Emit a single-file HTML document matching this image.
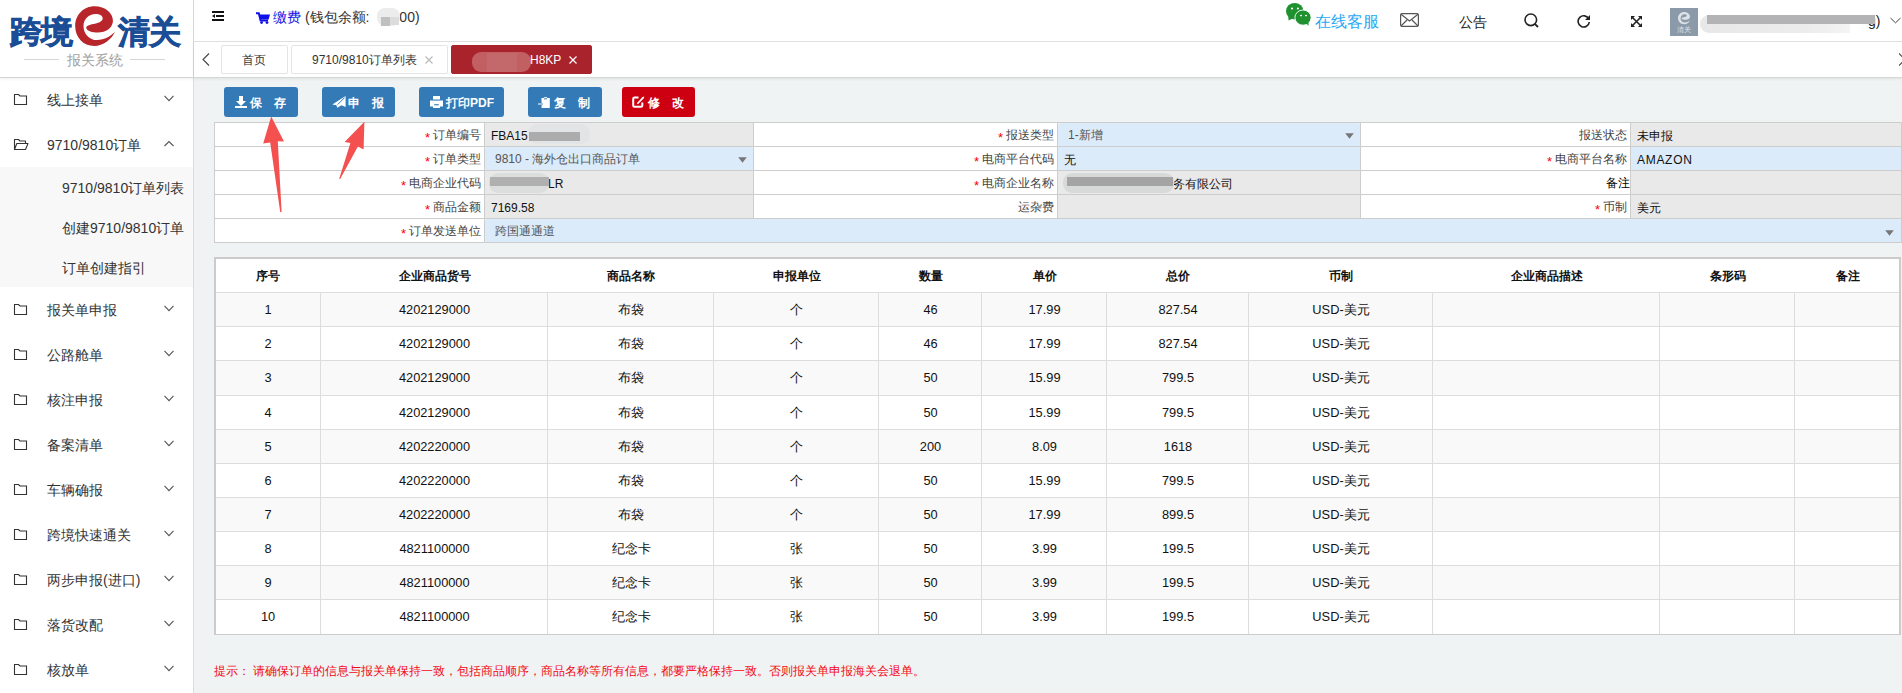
<!DOCTYPE html>
<html><head><meta charset="utf-8">
<style>
*{box-sizing:border-box;margin:0;padding:0}
html,body{width:1902px;height:693px;overflow:hidden}
body{position:relative;background:#f0f3f4;font-family:"Liberation Sans",sans-serif;color:#333;font-size:12px}
.abs{position:absolute}
#side{position:absolute;left:0;top:0;width:194px;height:693px;background:#fff;border-right:1px solid #dcdcdc}
#logo{position:absolute;left:0;top:0;width:193px;height:78px;border-bottom:1px solid #d6d6d6;box-shadow:0 1px 3px rgba(0,0,0,.07)}
.mi{position:absolute;left:0;width:193px;height:45px;font-size:14px;color:#333}
.mi .t{position:absolute;left:47px;top:14px;line-height:18px;white-space:nowrap}
.mi svg.f{position:absolute;left:13px;top:16px}
.mi svg.c{position:absolute;left:164px;top:18px}
#sub{position:absolute;left:0;top:167px;width:193px;height:120px;background:#f8f8f8}
.si{position:absolute;left:62px;font-size:14px;line-height:20px;color:#333;white-space:nowrap}
#hdr{position:absolute;left:194px;top:0;width:1708px;height:42px;background:#fff;border-bottom:1px solid #e2e2e2}
#tabs{position:absolute;left:194px;top:42px;width:1708px;height:36px;background:#fff;border-bottom:1px solid #d6d6d6;box-shadow:0 1px 3px rgba(0,0,0,.07)}
.tab{position:absolute;top:3px;height:29px;border:1px solid #e4e4e4;border-radius:2px;background:#fff;font-size:12px;line-height:29px;color:#333;white-space:nowrap}
.btn{position:absolute;top:87px;height:30px;border-radius:3px;background:#337ab7;color:#fff;font-size:12px;font-weight:bold;line-height:33px;white-space:nowrap}
.btn.red{background:#cc0010}
#form{position:absolute;left:214px;top:122px;width:1687px;border-collapse:collapse;table-layout:fixed}
#form td{height:24px;border:1px solid #cdcdcd;font-size:12px;padding:0;padding-top:1px;white-space:nowrap;overflow:hidden;line-height:22px}
#form td.l{background:#fff;text-align:right;color:#444;padding-right:3px}
#form td.v{background:#e9e9e9;color:#111;padding-left:6px;position:relative}
#form td.b{background:#dcebf9}
.req{color:#f00;font-size:13px;margin-right:3px;position:relative;top:3px}
#grid{position:absolute;left:214px;top:257px;width:1687px;border-collapse:collapse;table-layout:fixed;background:#fff}
#grid th{height:34px;font-size:12px;font-weight:bold;color:#111;border:1px solid #cfcfcf;border-left:0;border-right:0;text-align:center}
#grid td{height:34.15px;font-size:12.5px;color:#111;border:1px solid #dedede;text-align:center}
#grid tr.o td{background:#f9f9f9}
#hint{position:absolute;left:214px;top:663px;font-size:12px;color:#f20a14;white-space:nowrap;line-height:16px}
#form td.v .vt{line-height:22px;position:relative;top:1px}
#form td.sel{border-radius:4px;padding-left:10px}
#form td.sel .st{color:#555;line-height:22px}
.blur2{position:absolute;left:3px;top:3px;width:60px;height:17px;border-radius:8px;background:#dedede}
.blur2:after{content:"";position:absolute;left:3px;top:2px;width:54px;height:8px;background:#b8b8b8}
.blur3{position:absolute;left:3px;top:3px;width:112px;height:17px;border-radius:8px;background:#dedede}
.blur3:after{content:"";position:absolute;left:5px;top:2px;width:105px;height:8px;background:#b5b5b5}
.gh{position:absolute;top:260px;height:32px;line-height:33px;text-align:center;padding-left:2px;font-size:12px;font-weight:bold;color:#111;white-space:nowrap}
.gc{position:absolute;text-align:center;padding-left:2px;font-size:12.8px;color:#111;white-space:nowrap}
</style></head><body>
<div id="side">
  <div id="logo">
    <div class="abs" style="left:10px;top:12px;font-size:31.5px;font-weight:900;color:#1a4d95;line-height:40px;letter-spacing:-1px;-webkit-text-stroke:0.7px #1a4d95;white-space:nowrap">跨境</div>
    <svg class="abs" style="left:70px;top:2px" width="50" height="48" viewBox="0 0 722 693"><path fill="#b8262b" d="M650,430 C600,540 480,635 350,635 C190,635 75,510 75,350 C75,180 200,60 355,60 C510,60 625,160 620,275 C615,380 520,440 400,440 C330,440 240,420 235,375 C232,340 300,325 360,315 C430,300 475,270 472,235 C468,195 420,175 370,175 C270,175 195,250 195,345 C195,460 280,550 390,550 C500,550 590,490 650,430 Z"/></svg>
    <div class="abs" style="left:118px;top:12px;font-size:31.5px;font-weight:900;color:#1a4d95;line-height:40px;letter-spacing:-1px;-webkit-text-stroke:0.7px #1a4d95;white-space:nowrap">清关</div>
    <div class="abs" style="left:24px;top:59px;width:35px;height:1px;background:#d6d6d6"></div>
    <div class="abs" style="left:130px;top:59px;width:35px;height:1px;background:#d6d6d6"></div>
    <div class="abs" style="left:67px;top:52px;font-size:14px;color:#a0a0a0;line-height:16px;white-space:nowrap">报关系统</div>
  </div>
  <div class="mi" style="top:77px"><svg class="f" width="15" height="13" viewBox="0 0 15 13"><path d="M1.5,1.5 H5.5 L7,3 H13.5 V11.5 H1.5 Z" fill="none" stroke="#333" stroke-width="1.1"/></svg><span class="t">线上接单</span><svg class="c" width="10" height="7" viewBox="0 0 10 7"><path d="M0.5,0.8 L5,5.6 L9.5,0.8" fill="none" stroke="#555" stroke-width="1.1"/></svg></div>
  <div class="mi" style="top:122px"><svg class="f" width="16" height="13" viewBox="0 0 16 13"><path d="M1.5,11.5 V1.5 H5.5 L7,3 H12.5 V5.5 M1.5,11.5 L3.8,5.5 H15 L12.5,11.5 Z" fill="none" stroke="#333" stroke-width="1.1" stroke-linejoin="round"/></svg><span class="t">9710/9810订单</span><svg class="c" width="10" height="7" viewBox="0 0 10 7"><path d="M0.5,6 L5,1.5 L9.5,6" fill="none" stroke="#555" stroke-width="1.1"/></svg></div>
  <div id="sub"></div>
  <div class="si" style="top:178px">9710/9810订单列表</div>
  <div class="si" style="top:218px">创建9710/9810订单</div>
  <div class="si" style="top:258px">订单创建指引</div>
  <div class="mi" style="top:287px"><svg class="f" width="15" height="13" viewBox="0 0 15 13"><path d="M1.5,1.5 H5.5 L7,3 H13.5 V11.5 H1.5 Z" fill="none" stroke="#333" stroke-width="1.1"/></svg><span class="t">报关单申报</span><svg class="c" width="10" height="7" viewBox="0 0 10 7"><path d="M0.5,0.8 L5,5.6 L9.5,0.8" fill="none" stroke="#555" stroke-width="1.1"/></svg></div>
  <div class="mi" style="top:332px"><svg class="f" width="15" height="13" viewBox="0 0 15 13"><path d="M1.5,1.5 H5.5 L7,3 H13.5 V11.5 H1.5 Z" fill="none" stroke="#333" stroke-width="1.1"/></svg><span class="t">公路舱单</span><svg class="c" width="10" height="7" viewBox="0 0 10 7"><path d="M0.5,0.8 L5,5.6 L9.5,0.8" fill="none" stroke="#555" stroke-width="1.1"/></svg></div>
  <div class="mi" style="top:377px"><svg class="f" width="15" height="13" viewBox="0 0 15 13"><path d="M1.5,1.5 H5.5 L7,3 H13.5 V11.5 H1.5 Z" fill="none" stroke="#333" stroke-width="1.1"/></svg><span class="t">核注申报</span><svg class="c" width="10" height="7" viewBox="0 0 10 7"><path d="M0.5,0.8 L5,5.6 L9.5,0.8" fill="none" stroke="#555" stroke-width="1.1"/></svg></div>
  <div class="mi" style="top:422px"><svg class="f" width="15" height="13" viewBox="0 0 15 13"><path d="M1.5,1.5 H5.5 L7,3 H13.5 V11.5 H1.5 Z" fill="none" stroke="#333" stroke-width="1.1"/></svg><span class="t">备案清单</span><svg class="c" width="10" height="7" viewBox="0 0 10 7"><path d="M0.5,0.8 L5,5.6 L9.5,0.8" fill="none" stroke="#555" stroke-width="1.1"/></svg></div>
  <div class="mi" style="top:467px"><svg class="f" width="15" height="13" viewBox="0 0 15 13"><path d="M1.5,1.5 H5.5 L7,3 H13.5 V11.5 H1.5 Z" fill="none" stroke="#333" stroke-width="1.1"/></svg><span class="t">车辆确报</span><svg class="c" width="10" height="7" viewBox="0 0 10 7"><path d="M0.5,0.8 L5,5.6 L9.5,0.8" fill="none" stroke="#555" stroke-width="1.1"/></svg></div>
  <div class="mi" style="top:512px"><svg class="f" width="15" height="13" viewBox="0 0 15 13"><path d="M1.5,1.5 H5.5 L7,3 H13.5 V11.5 H1.5 Z" fill="none" stroke="#333" stroke-width="1.1"/></svg><span class="t">跨境快速通关</span><svg class="c" width="10" height="7" viewBox="0 0 10 7"><path d="M0.5,0.8 L5,5.6 L9.5,0.8" fill="none" stroke="#555" stroke-width="1.1"/></svg></div>
  <div class="mi" style="top:557px"><svg class="f" width="15" height="13" viewBox="0 0 15 13"><path d="M1.5,1.5 H5.5 L7,3 H13.5 V11.5 H1.5 Z" fill="none" stroke="#333" stroke-width="1.1"/></svg><span class="t">两步申报(进口)</span><svg class="c" width="10" height="7" viewBox="0 0 10 7"><path d="M0.5,0.8 L5,5.6 L9.5,0.8" fill="none" stroke="#555" stroke-width="1.1"/></svg></div>
  <div class="mi" style="top:602px"><svg class="f" width="15" height="13" viewBox="0 0 15 13"><path d="M1.5,1.5 H5.5 L7,3 H13.5 V11.5 H1.5 Z" fill="none" stroke="#333" stroke-width="1.1"/></svg><span class="t">落货改配</span><svg class="c" width="10" height="7" viewBox="0 0 10 7"><path d="M0.5,0.8 L5,5.6 L9.5,0.8" fill="none" stroke="#555" stroke-width="1.1"/></svg></div>
  <div class="mi" style="top:647px"><svg class="f" width="15" height="13" viewBox="0 0 15 13"><path d="M1.5,1.5 H5.5 L7,3 H13.5 V11.5 H1.5 Z" fill="none" stroke="#333" stroke-width="1.1"/></svg><span class="t">核放单</span><svg class="c" width="10" height="7" viewBox="0 0 10 7"><path d="M0.5,0.8 L5,5.6 L9.5,0.8" fill="none" stroke="#555" stroke-width="1.1"/></svg></div>
</div>
<div id="hdr">
  <svg class="abs" style="left:18px;top:11px" width="12" height="10" viewBox="0 0 12 10"><path d="M0,1 H12 M4,5 H12 M0,9 H12" stroke="#111" stroke-width="1.8"/><path d="M0,5 L3,3 V7 Z" fill="#111"/></svg>
  <svg class="abs" style="left:62px;top:12px" width="14" height="12" viewBox="0 0 14 12"><path d="M0,1.2 H2.8 L4.6,8.6 H12" fill="none" stroke="#1010e8" stroke-width="2"/><path d="M3,2.5 H14 L12.6,7.6 H4.3 Z" fill="#1010e8"/><circle cx="5.6" cy="10.6" r="1.4" fill="#1010e8"/><circle cx="11" cy="10.6" r="1.4" fill="#1010e8"/></svg>
  <div class="abs" style="left:79px;top:8px;font-size:14px;line-height:18px;white-space:nowrap;color:#333"><span style="color:#1010e8">缴费</span> (钱包余额: <span style="display:inline-block;width:23px;height:18px;margin-left:4px;margin-right:-1px;vertical-align:top;background:#ececec;border-radius:8px;position:relative"><span style="position:absolute;left:4px;top:9px;width:9px;height:9px;background:#c0c0c3"></span><span style="position:absolute;left:13px;top:9px;width:9px;height:8px;background:#dcdcdc"></span></span>00)</div>
  <svg class="abs" style="left:1092px;top:2px" width="26" height="25" viewBox="0 0 26 25"><ellipse cx="8.7" cy="9.2" rx="8.7" ry="8.3" fill="#1f922f"/><path d="M2.2,14 L2.6,18.6 L6.5,16.4 Z" fill="#1f922f"/><ellipse cx="6" cy="6.4" rx="1.1" ry="1" fill="#fff"/><ellipse cx="11.9" cy="6.4" rx="1.1" ry="1" fill="#fff"/><ellipse cx="17" cy="15.6" rx="8.1" ry="7.6" fill="#1f922f" stroke="#fff" stroke-width="0.9"/><path d="M20,21 L22.6,24 L22.4,19.5 Z" fill="#1f922f"/><ellipse cx="15" cy="13.6" rx="1" ry="0.8" fill="#fff"/><ellipse cx="20" cy="13.6" rx="1" ry="0.8" fill="#fff"/></svg>
  <div class="abs" style="left:1121px;top:12px;font-size:16px;line-height:20px;color:#2aa9f3;white-space:nowrap">在线客服</div>
  <svg class="abs" style="left:1206px;top:13px" width="19" height="14" viewBox="0 0 19 14"><rect x="0.6" y="0.6" width="17.8" height="12.8" rx="1.5" fill="none" stroke="#555" stroke-width="1.2"/><path d="M1,1.2 L9.5,8 L18,1.2 M1,13 L7,7 M18,13 L12,7" fill="none" stroke="#555" stroke-width="1.2"/></svg>
  <div class="abs" style="left:1265px;top:13px;font-size:14px;line-height:18px;color:#222;white-space:nowrap">公告</div>
  <svg class="abs" style="left:1330px;top:13px" width="15" height="15" viewBox="0 0 15 15"><circle cx="6.8" cy="6.8" r="5.8" fill="none" stroke="#222" stroke-width="1.6"/><path d="M10.8,10.8 L14,14" stroke="#222" stroke-width="1.8"/></svg>
  <svg class="abs" style="left:1383px;top:14px" width="14" height="14" viewBox="0 0 14 14"><path d="M11.8,5 A5.6,5.6 0 1 0 12.3,8" fill="none" stroke="#222" stroke-width="1.6"/><path d="M13,1 V6 H8 Z" fill="#222"/></svg>
  <svg class="abs" style="left:1437px;top:16px" width="11" height="11" viewBox="0 0 11 11"><path d="M1.5,1.5 L9.5,9.5 M9.5,1.5 L1.5,9.5" stroke="#222" stroke-width="1.6"/><path d="M0,0 H4 L0,4 Z M11,0 V4 L7,0 Z M0,11 V7 L4,11 Z M11,11 H7 L11,7 Z" fill="#222"/></svg>
  <div class="abs" style="left:1476px;top:8px;width:28px;height:28px;background:#8a9aa8"><svg class="abs" style="left:7px;top:3px" width="14" height="14" viewBox="0 0 14 14"><path d="M13,9.6 C12,12 9.8,13.3 7.2,13.3 C3.6,13.3 1,10.5 1,7.1 C1,3.6 3.7,1 7.1,1 C10.4,1 13,3.2 13,5.8 C13,7.8 11.2,8.8 8.8,8.8 C7,8.8 4.6,8.4 4.6,7.3 C4.6,6.4 6.3,6.1 7.7,5.9 C9.1,5.6 9.8,5.1 9.8,4.4 C9.8,3.6 8.6,3.2 7.5,3.2 C5.2,3.2 3.6,4.9 3.6,7.2 C3.6,9.7 5.3,11.5 7.7,11.5 C9.8,11.5 11.8,10.8 13,9.6 Z" fill="#dde2e7"/></svg><div class="abs" style="left:7px;top:17px;font-size:7px;line-height:9px;color:#dfe4e8;white-space:nowrap;letter-spacing:-0.5px">清关</div></div>
  <div class="abs" style="left:1674px;top:12px;font-size:14px;line-height:18px;color:#222;white-space:nowrap">g)</div>
  <div class="abs" style="left:1506px;top:15px;width:150px;height:18px;border-radius:9px 0 0 9px;background:linear-gradient(90deg,#e8e8e8,#ececec 70%,#f4f4f4)"></div>
  <div class="abs" style="left:1513px;top:15px;width:168px;height:9px;background:#b3b3b5"></div>
<svg class="abs" style="left:1696px;top:17px" width="11" height="7" viewBox="0 0 11 7"><path d="M0.5,1 L5.5,5.8 L10.5,1" fill="none" stroke="#444" stroke-width="1"/></svg>
</div>
<div id="tabs">
  <svg class="abs" style="left:8px;top:11px" width="8" height="13" viewBox="0 0 8 13"><path d="M7,0.5 L1,6.5 L7,12.5" fill="none" stroke="#444" stroke-width="1.1"/></svg>
  <div class="tab" style="left:27px;width:67px;text-align:center;padding-right:2px">首页</div>
  <div class="tab" style="left:97px;width:157px;padding-left:20px">9710/9810订单列表<svg class="abs" style="left:133px;top:10px" width="8" height="8" viewBox="0 0 8 8"><path d="M0.5,0.5 L7.5,7.5 M7.5,0.5 L0.5,7.5" stroke="#b8b8b8" stroke-width="1.1"/></svg></div>
  <div class="tab" style="left:257px;width:141px;background:#a9232d;border-color:#a9232d;color:#fff"><span class="abs" style="left:20px;top:6px;width:59px;height:20px;border-radius:9px;background:#c15f62"></span><span class="abs" style="left:35px;top:7px;width:30px;height:19px;background:#c4696b"></span><span class="abs" style="left:78px;top:0">H8KP</span><svg class="abs" style="left:117px;top:10px" width="8" height="8" viewBox="0 0 8 8"><path d="M0.5,0.5 L7.5,7.5 M7.5,0.5 L0.5,7.5" stroke="#fff" stroke-width="1.2"/></svg></div>
  <svg class="abs" style="left:1705px;top:11px" width="6" height="13" viewBox="0 0 6 13"><path d="M0,0.5 L6,6.5 L0,12.5" fill="none" stroke="#444" stroke-width="1.1"/></svg>
</div>
<div class="btn" style="left:224px;width:74px"><svg class="abs" style="left:11px;top:9px" width="12" height="12" viewBox="0 0 12 12"><path d="M4,0 H8 V5 H11 L6,10 L1,5 H4 Z" fill="#fff"/><rect x="0" y="10" width="12" height="2" fill="#fff"/></svg><span class="abs" style="left:26px;top:0">保</span><span class="abs" style="left:50px;top:0">存</span></div>
<div class="btn" style="left:322px;width:73px"><svg class="abs" style="left:10px;top:8px" width="15" height="14" viewBox="0 0 15 14"><path d="M0.3,9.4 L13.6,0.9 V12 L9.5,10.3 L5.2,12.7 L4.5,10.2 Z" fill="#fff"/><path d="M5.6,9.6 L12.6,2.6" stroke="#337ab7" stroke-width="1"/></svg><span class="abs" style="left:26px;top:0">申</span><span class="abs" style="left:50px;top:0">报</span></div>
<div class="btn" style="left:419px;width:85px"><svg class="abs" style="left:11px;top:9px" width="13" height="12" viewBox="0 0 13 12"><path d="M3,0 H10 V4.5 H3 Z M0,4.6 H13 V10.5 H0 Z M3,9.3 H10 V12 H3 Z" fill="#fff"/><rect x="4.2" y="8.2" width="4.6" height="1.1" fill="#337ab7"/><rect x="3" y="3.5" width="7" height="1.1" fill="#337ab7"/></svg><span class="abs" style="left:27px;top:0">打印PDF</span></div>
<div class="btn" style="left:528px;width:74px"><svg class="abs" style="left:10px;top:10px" width="13" height="12" viewBox="0 0 13 12"><path d="M3.5,1 H5.5 Q6,0 7.5,0 Q9,0 9.5,1 H11.8 V11 H3.5 V8.5 L5,7 L3.5,5.5 Z" fill="#fff"/><path d="M6,1.8 H9" stroke="#337ab7" stroke-width="1"/><path d="M0,7 H4" stroke="#fff" stroke-width="1"/></svg><span class="abs" style="left:26px;top:0">复</span><span class="abs" style="left:50px;top:0">制</span></div>
<div class="btn red" style="left:622px;width:73px"><svg class="abs" style="left:10px;top:9px" width="13" height="12" viewBox="0 0 13 12"><path d="M6.5,1.6 H2.5 Q1.2,1.6 1.2,2.9 V9.5 Q1.2,10.8 2.5,10.8 H9 Q10.3,10.8 10.3,9.5 V6.5" fill="none" stroke="#fff" stroke-width="2"/><path d="M4.8,7.3 L10.5,1 L12.3,0.5 L11.6,2.4 L6,8.2 Z" fill="#fff"/></svg><span class="abs" style="left:26px;top:0">修</span><span class="abs" style="left:50px;top:0">改</span></div>
<table id="form"><colgroup><col style="width:270px"><col style="width:269px"><col style="width:304px"><col style="width:303px"><col style="width:270px"><col style="width:271px"></colgroup>
<tr><td class="l"><span class="req">*</span>订单编号</td><td class="v"><span class="vt">FBA15</span></td><td class="l"><span class="req">*</span>报送类型</td><td class="v b sel"><span class="st">1-新增</span><svg class="abs" style="right:6px;top:10px" width="9" height="6" viewBox="0 0 9 6"><path d="M0.2,0.3 H8.8 L4.5,5.8 Z" fill="#777"/></svg></td><td class="l">报送状态</td><td class="v"><span class="vt">未申报</span></td></tr>
<tr><td class="l"><span class="req">*</span>订单类型</td><td class="v b sel"><span class="st">9810 - 海外仓出口商品订单</span><svg class="abs" style="right:6px;top:10px" width="9" height="6" viewBox="0 0 9 6"><path d="M0.2,0.3 H8.8 L4.5,5.8 Z" fill="#777"/></svg></td><td class="l"><span class="req">*</span>电商平台代码</td><td class="v b"><span class="vt">无</span></td><td class="l"><span class="req">*</span>电商平台名称</td><td class="v b"><span class="vt" style="letter-spacing:0.7px">AMAZON</span></td></tr>
<tr><td class="l"><span class="req">*</span>电商企业代码</td><td class="v"><span class="vt" style="position:absolute;left:63px;top:2px">LR</span></td><td class="l"><span class="req">*</span>电商企业名称</td><td class="v"><span class="vt" style="position:absolute;left:115px;top:2px">务有限公司</span></td><td class="l" style="color:#000;padding-right:0">备注</td><td class="v"></td></tr>
<tr><td class="l"><span class="req">*</span>商品金额</td><td class="v"><span class="vt">7169.58</span></td><td class="l">运杂费</td><td class="v"></td><td class="l"><span class="req">*</span>币制</td><td class="v"><span class="vt">美元</span></td></tr>
<tr><td class="l"><span class="req">*</span>订单发送单位</td><td class="v b sel" colspan="5"><span class="st">跨国通通道</span><svg class="abs" style="right:7px;top:11px" width="9" height="6" viewBox="0 0 9 6"><path d="M0.2,0.3 H8.8 L4.5,5.8 Z" fill="#777"/></svg></td></tr>
</table>
<div class="abs" style="left:528px;top:124px;width:62px;height:20px;border-radius:9px;background:#e3e4e5"></div>
<div class="abs" style="left:529px;top:132px;width:51px;height:9px;background:#acacac"></div>
<div class="abs" style="left:489px;top:173px;width:60px;height:20px;border-radius:9px;background:#dcdddd"></div>
<div class="abs" style="left:490px;top:177px;width:59px;height:9px;background:#b0b0b0"></div>
<div class="abs" style="left:1063px;top:173px;width:111px;height:20px;border-radius:9px;background:#d8d9d9"></div>
<div class="abs" style="left:1067px;top:177px;width:106px;height:9px;background:#a4a4a4"></div>
<div id="grid2">
<div class="abs" style="left:214px;top:257px;width:1687px;height:378px;border:2px solid #cbcbcb;border-bottom-width:1px;background:#fff"></div>
<div class="gh" style="left:214px;width:106px">序号</div>
<div class="gh" style="left:320px;width:227px">企业商品货号</div>
<div class="gh" style="left:547px;width:166px">商品名称</div>
<div class="gh" style="left:713px;width:165px">申报单位</div>
<div class="gh" style="left:878px;width:103px">数量</div>
<div class="gh" style="left:981px;width:125px">单价</div>
<div class="gh" style="left:1106px;width:142px">总价</div>
<div class="gh" style="left:1248px;width:184px">币制</div>
<div class="gh" style="left:1432px;width:227px">企业商品描述</div>
<div class="gh" style="left:1659px;width:135px">条形码</div>
<div class="gh" style="left:1794px;width:106px">备注</div>
<div class="abs" style="left:216px;top:293px;width:1683px;height:33px;background:#f9f9f9"></div>
<div class="gc" style="left:214px;top:292px;width:106px;height:34px;line-height:35px">1</div>
<div class="gc" style="left:320px;top:292px;width:227px;height:34px;line-height:35px">4202129000</div>
<div class="gc" style="left:547px;top:292px;width:166px;height:34px;line-height:35px">布袋</div>
<div class="gc" style="left:713px;top:292px;width:165px;height:34px;line-height:35px">个</div>
<div class="gc" style="left:878px;top:292px;width:103px;height:34px;line-height:35px">46</div>
<div class="gc" style="left:981px;top:292px;width:125px;height:34px;line-height:35px">17.99</div>
<div class="gc" style="left:1106px;top:292px;width:142px;height:34px;line-height:35px">827.54</div>
<div class="gc" style="left:1248px;top:292px;width:184px;height:34px;line-height:35px">USD-美元</div>
<div class="gc" style="left:214px;top:326px;width:106px;height:34px;line-height:35px">2</div>
<div class="gc" style="left:320px;top:326px;width:227px;height:34px;line-height:35px">4202129000</div>
<div class="gc" style="left:547px;top:326px;width:166px;height:34px;line-height:35px">布袋</div>
<div class="gc" style="left:713px;top:326px;width:165px;height:34px;line-height:35px">个</div>
<div class="gc" style="left:878px;top:326px;width:103px;height:34px;line-height:35px">46</div>
<div class="gc" style="left:981px;top:326px;width:125px;height:34px;line-height:35px">17.99</div>
<div class="gc" style="left:1106px;top:326px;width:142px;height:34px;line-height:35px">827.54</div>
<div class="gc" style="left:1248px;top:326px;width:184px;height:34px;line-height:35px">USD-美元</div>
<div class="abs" style="left:216px;top:361px;width:1683px;height:34px;background:#f9f9f9"></div>
<div class="gc" style="left:214px;top:360px;width:106px;height:35px;line-height:36px">3</div>
<div class="gc" style="left:320px;top:360px;width:227px;height:35px;line-height:36px">4202129000</div>
<div class="gc" style="left:547px;top:360px;width:166px;height:35px;line-height:36px">布袋</div>
<div class="gc" style="left:713px;top:360px;width:165px;height:35px;line-height:36px">个</div>
<div class="gc" style="left:878px;top:360px;width:103px;height:35px;line-height:36px">50</div>
<div class="gc" style="left:981px;top:360px;width:125px;height:35px;line-height:36px">15.99</div>
<div class="gc" style="left:1106px;top:360px;width:142px;height:35px;line-height:36px">799.5</div>
<div class="gc" style="left:1248px;top:360px;width:184px;height:35px;line-height:36px">USD-美元</div>
<div class="gc" style="left:214px;top:395px;width:106px;height:34px;line-height:35px">4</div>
<div class="gc" style="left:320px;top:395px;width:227px;height:34px;line-height:35px">4202129000</div>
<div class="gc" style="left:547px;top:395px;width:166px;height:34px;line-height:35px">布袋</div>
<div class="gc" style="left:713px;top:395px;width:165px;height:34px;line-height:35px">个</div>
<div class="gc" style="left:878px;top:395px;width:103px;height:34px;line-height:35px">50</div>
<div class="gc" style="left:981px;top:395px;width:125px;height:34px;line-height:35px">15.99</div>
<div class="gc" style="left:1106px;top:395px;width:142px;height:34px;line-height:35px">799.5</div>
<div class="gc" style="left:1248px;top:395px;width:184px;height:34px;line-height:35px">USD-美元</div>
<div class="abs" style="left:216px;top:430px;width:1683px;height:33px;background:#f9f9f9"></div>
<div class="gc" style="left:214px;top:429px;width:106px;height:34px;line-height:35px">5</div>
<div class="gc" style="left:320px;top:429px;width:227px;height:34px;line-height:35px">4202220000</div>
<div class="gc" style="left:547px;top:429px;width:166px;height:34px;line-height:35px">布袋</div>
<div class="gc" style="left:713px;top:429px;width:165px;height:34px;line-height:35px">个</div>
<div class="gc" style="left:878px;top:429px;width:103px;height:34px;line-height:35px">200</div>
<div class="gc" style="left:981px;top:429px;width:125px;height:34px;line-height:35px">8.09</div>
<div class="gc" style="left:1106px;top:429px;width:142px;height:34px;line-height:35px">1618</div>
<div class="gc" style="left:1248px;top:429px;width:184px;height:34px;line-height:35px">USD-美元</div>
<div class="gc" style="left:214px;top:463px;width:106px;height:34px;line-height:35px">6</div>
<div class="gc" style="left:320px;top:463px;width:227px;height:34px;line-height:35px">4202220000</div>
<div class="gc" style="left:547px;top:463px;width:166px;height:34px;line-height:35px">布袋</div>
<div class="gc" style="left:713px;top:463px;width:165px;height:34px;line-height:35px">个</div>
<div class="gc" style="left:878px;top:463px;width:103px;height:34px;line-height:35px">50</div>
<div class="gc" style="left:981px;top:463px;width:125px;height:34px;line-height:35px">15.99</div>
<div class="gc" style="left:1106px;top:463px;width:142px;height:34px;line-height:35px">799.5</div>
<div class="gc" style="left:1248px;top:463px;width:184px;height:34px;line-height:35px">USD-美元</div>
<div class="abs" style="left:216px;top:498px;width:1683px;height:33px;background:#f9f9f9"></div>
<div class="gc" style="left:214px;top:497px;width:106px;height:34px;line-height:35px">7</div>
<div class="gc" style="left:320px;top:497px;width:227px;height:34px;line-height:35px">4202220000</div>
<div class="gc" style="left:547px;top:497px;width:166px;height:34px;line-height:35px">布袋</div>
<div class="gc" style="left:713px;top:497px;width:165px;height:34px;line-height:35px">个</div>
<div class="gc" style="left:878px;top:497px;width:103px;height:34px;line-height:35px">50</div>
<div class="gc" style="left:981px;top:497px;width:125px;height:34px;line-height:35px">17.99</div>
<div class="gc" style="left:1106px;top:497px;width:142px;height:34px;line-height:35px">899.5</div>
<div class="gc" style="left:1248px;top:497px;width:184px;height:34px;line-height:35px">USD-美元</div>
<div class="gc" style="left:214px;top:531px;width:106px;height:34px;line-height:35px">8</div>
<div class="gc" style="left:320px;top:531px;width:227px;height:34px;line-height:35px">4821100000</div>
<div class="gc" style="left:547px;top:531px;width:166px;height:34px;line-height:35px">纪念卡</div>
<div class="gc" style="left:713px;top:531px;width:165px;height:34px;line-height:35px">张</div>
<div class="gc" style="left:878px;top:531px;width:103px;height:34px;line-height:35px">50</div>
<div class="gc" style="left:981px;top:531px;width:125px;height:34px;line-height:35px">3.99</div>
<div class="gc" style="left:1106px;top:531px;width:142px;height:34px;line-height:35px">199.5</div>
<div class="gc" style="left:1248px;top:531px;width:184px;height:34px;line-height:35px">USD-美元</div>
<div class="abs" style="left:216px;top:566px;width:1683px;height:33px;background:#f9f9f9"></div>
<div class="gc" style="left:214px;top:565px;width:106px;height:34px;line-height:35px">9</div>
<div class="gc" style="left:320px;top:565px;width:227px;height:34px;line-height:35px">4821100000</div>
<div class="gc" style="left:547px;top:565px;width:166px;height:34px;line-height:35px">纪念卡</div>
<div class="gc" style="left:713px;top:565px;width:165px;height:34px;line-height:35px">张</div>
<div class="gc" style="left:878px;top:565px;width:103px;height:34px;line-height:35px">50</div>
<div class="gc" style="left:981px;top:565px;width:125px;height:34px;line-height:35px">3.99</div>
<div class="gc" style="left:1106px;top:565px;width:142px;height:34px;line-height:35px">199.5</div>
<div class="gc" style="left:1248px;top:565px;width:184px;height:34px;line-height:35px">USD-美元</div>
<div class="gc" style="left:214px;top:599px;width:106px;height:35px;line-height:36px">10</div>
<div class="gc" style="left:320px;top:599px;width:227px;height:35px;line-height:36px">4821100000</div>
<div class="gc" style="left:547px;top:599px;width:166px;height:35px;line-height:36px">纪念卡</div>
<div class="gc" style="left:713px;top:599px;width:165px;height:35px;line-height:36px">张</div>
<div class="gc" style="left:878px;top:599px;width:103px;height:35px;line-height:36px">50</div>
<div class="gc" style="left:981px;top:599px;width:125px;height:35px;line-height:36px">3.99</div>
<div class="gc" style="left:1106px;top:599px;width:142px;height:35px;line-height:36px">199.5</div>
<div class="gc" style="left:1248px;top:599px;width:184px;height:35px;line-height:36px">USD-美元</div>
<div class="abs" style="left:216px;top:292px;width:1683px;height:1px;background:#dddddd"></div>
<div class="abs" style="left:216px;top:326px;width:1683px;height:1px;background:#dddddd"></div>
<div class="abs" style="left:216px;top:360px;width:1683px;height:1px;background:#dddddd"></div>
<div class="abs" style="left:216px;top:395px;width:1683px;height:1px;background:#dddddd"></div>
<div class="abs" style="left:216px;top:429px;width:1683px;height:1px;background:#dddddd"></div>
<div class="abs" style="left:216px;top:463px;width:1683px;height:1px;background:#dddddd"></div>
<div class="abs" style="left:216px;top:497px;width:1683px;height:1px;background:#dddddd"></div>
<div class="abs" style="left:216px;top:531px;width:1683px;height:1px;background:#dddddd"></div>
<div class="abs" style="left:216px;top:565px;width:1683px;height:1px;background:#dddddd"></div>
<div class="abs" style="left:216px;top:599px;width:1683px;height:1px;background:#dddddd"></div>
<div class="abs" style="left:320px;top:292px;width:1px;height:342px;background:#dddddd"></div>
<div class="abs" style="left:547px;top:292px;width:1px;height:342px;background:#dddddd"></div>
<div class="abs" style="left:713px;top:292px;width:1px;height:342px;background:#dddddd"></div>
<div class="abs" style="left:878px;top:292px;width:1px;height:342px;background:#dddddd"></div>
<div class="abs" style="left:981px;top:292px;width:1px;height:342px;background:#dddddd"></div>
<div class="abs" style="left:1106px;top:292px;width:1px;height:342px;background:#dddddd"></div>
<div class="abs" style="left:1248px;top:292px;width:1px;height:342px;background:#dddddd"></div>
<div class="abs" style="left:1432px;top:292px;width:1px;height:342px;background:#dddddd"></div>
<div class="abs" style="left:1659px;top:292px;width:1px;height:342px;background:#dddddd"></div>
<div class="abs" style="left:1794px;top:292px;width:1px;height:342px;background:#dddddd"></div>
</div>
<svg class="abs" style="left:0;top:0;pointer-events:none" width="1902" height="693" viewBox="0 0 1902 693"><path fill="#f55050" d="M271.2,116.5 L284,141.5 L277.8,141.3 L281.6,212 L280.2,212 L270.2,142.6 L263.2,143.6 Z"/><path fill="#f55050" d="M364.4,121.8 L363.6,149.6 L357.9,146.6 L340,179.2 L339.2,178.8 L350.4,143 L344.6,142 Z"/></svg>
<div id="hint">提示： 请确保订单的信息与报关单保持一致，包括商品顺序，商品名称等所有信息，都要严格保持一致。否则报关单申报海关会退单。</div>
</body></html>
